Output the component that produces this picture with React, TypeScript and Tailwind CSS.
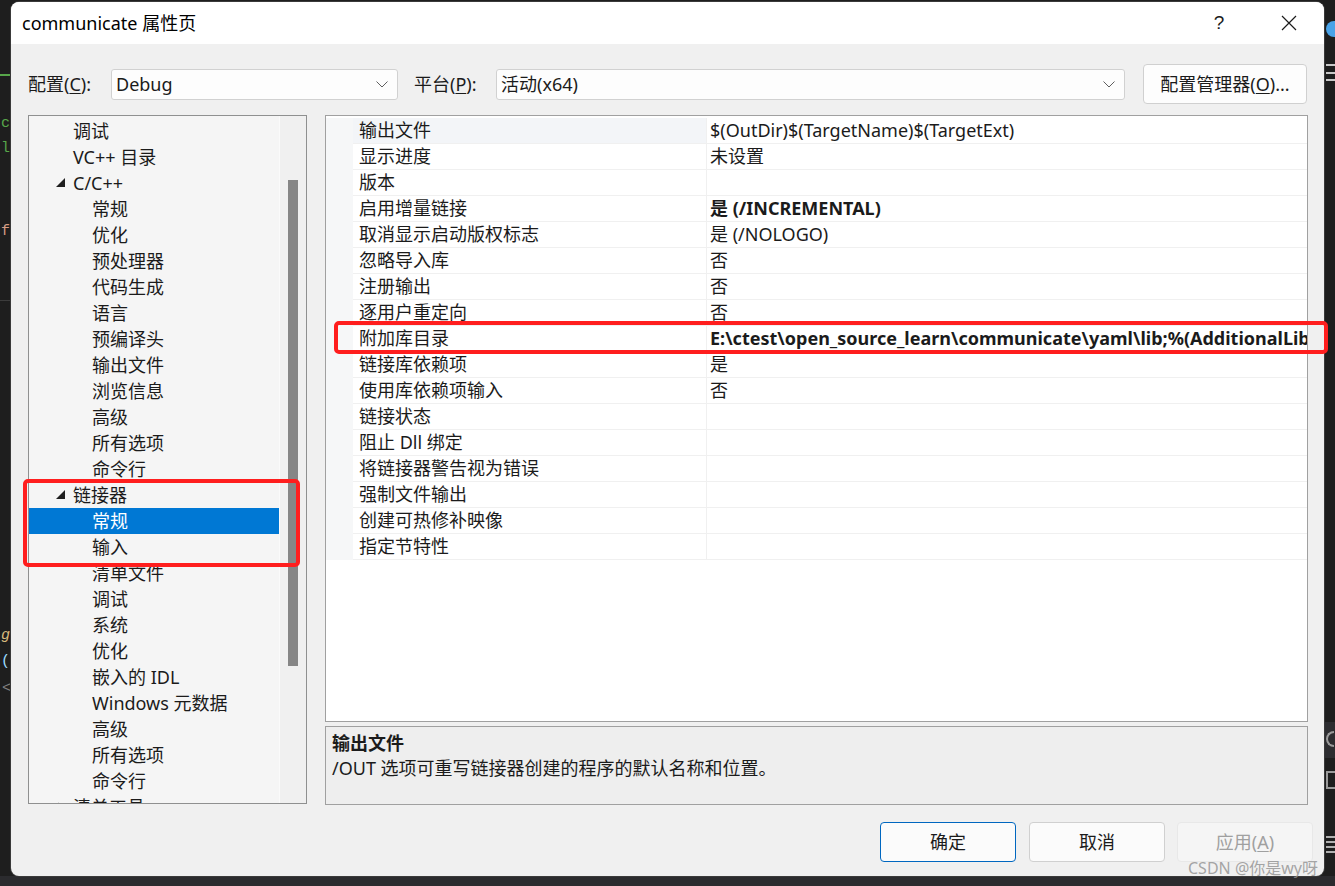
import React from "react";

// Property page dialog (Visual Studio style)

interface TreeItem {
  label: string;
  level: 0 | 1;
  expand?: "open" | "closed";
  selected?: boolean;
}

interface PropRow {
  name: string;
  value?: string;
  bold?: boolean;
  current?: boolean;
}

const tree: TreeItem[] = [
  { label: "调试", level: 0 },
  { label: "VC++ 目录", level: 0 },
  { label: "C/C++", level: 0, expand: "open" },
  { label: "常规", level: 1 },
  { label: "优化", level: 1 },
  { label: "预处理器", level: 1 },
  { label: "代码生成", level: 1 },
  { label: "语言", level: 1 },
  { label: "预编译头", level: 1 },
  { label: "输出文件", level: 1 },
  { label: "浏览信息", level: 1 },
  { label: "高级", level: 1 },
  { label: "所有选项", level: 1 },
  { label: "命令行", level: 1 },
  { label: "链接器", level: 0, expand: "open" },
  { label: "常规", level: 1, selected: true },
  { label: "输入", level: 1 },
  { label: "清单文件", level: 1 },
  { label: "调试", level: 1 },
  { label: "系统", level: 1 },
  { label: "优化", level: 1 },
  { label: "嵌入的 IDL", level: 1 },
  { label: "Windows 元数据", level: 1 },
  { label: "高级", level: 1 },
  { label: "所有选项", level: 1 },
  { label: "命令行", level: 1 },
  { label: "清单工具", level: 0, expand: "closed" },
];

const rows: PropRow[] = [
  { name: "输出文件", value: "$(OutDir)$(TargetName)$(TargetExt)", current: true },
  { name: "显示进度", value: "未设置" },
  { name: "版本" },
  { name: "启用增量链接", value: "是 (/INCREMENTAL)", bold: true },
  { name: "取消显示启动版权标志", value: "是 (/NOLOGO)" },
  { name: "忽略导入库", value: "否" },
  { name: "注册输出", value: "否" },
  { name: "逐用户重定向", value: "否" },
  { name: "附加库目录", value: "E:\\ctest\\open_source_learn\\communicate\\yaml\\lib;%(AdditionalLibraryDirectories)", bold: true },
  { name: "链接库依赖项", value: "是" },
  { name: "使用库依赖项输入", value: "否" },
  { name: "链接状态" },
  { name: "阻止 Dll 绑定" },
  { name: "将链接器警告视为错误" },
  { name: "强制文件输出" },
  { name: "创建可热修补映像" },
  { name: "指定节特性" },
];

const Chevron = () => (
  <svg width="12" height="7" viewBox="0 0 12 7">
    <path d="M0.5 0.5 L6 6 L11.5 0.5" fill="none" stroke="#5f5f5f" strokeWidth="1" />
  </svg>
);

const Expander = ({ open }: { open: boolean }) =>
  open ? (
    <svg width="9" height="9" viewBox="0 0 9 9">
      <polygon points="9,0 9,9 0,9" fill="#1e1e1e" />
    </svg>
  ) : (
    <svg width="9" height="9" viewBox="0 0 9 9">
      <polygon points="2,1 7,4.5 2,8" fill="none" stroke="#444" strokeWidth="1" />
    </svg>
  );

const Combo = ({ text, width }: { text: string; width: string }) => (
  <div className={`${width} h-[31px] flex items-center justify-between pl-[4px] pr-[9px] bg-[#fdfdfd] border border-[#d1d1d1] rounded-[3px]`}>
    <span>{text}</span>
    <Chevron />
  </div>
);

const Button = ({ children, kind }: { children: React.ReactNode; kind?: "default" | "disabled" }) => (
  <div
    className={
      "w-[136px] h-[40px] flex items-center justify-center rounded-[4px] " +
      (kind === "default"
        ? "border border-[#0067c0] bg-[#fbfbfb] text-[#1b1b1b]"
        : kind === "disabled"
        ? "border border-[#e8e8e8] bg-[#f5f5f5] text-[#a0a0a0]"
        : "border border-[#d0d0d0] bg-[#fbfbfb] text-[#1b1b1b]")
    }
  >
    {children}
  </div>
);

export default function App() {
  return (
    <div className="relative w-[1335px] h-[886px] overflow-hidden bg-[#1e1e1e] font-[family-name:'Noto_Sans','Noto_Sans_CJK_SC',sans-serif] text-[18px] text-[#1b1b1b]">
      {/* editor fragments behind the dialog */}
      <div className="absolute left-0 top-[74px] w-[10px] border-t-2 border-dashed border-[#57a64a]" />
      <span className="absolute left-[1px] top-[115px] text-[15px] leading-[18px] text-[#57a64a] font-[family-name:'Liberation_Mono',monospace]">c</span>
      <span className="absolute left-[1px] top-[140px] text-[15px] leading-[18px] text-[#57a64a] font-[family-name:'Liberation_Mono',monospace]">l</span>
      <span className="absolute left-[1px] top-[223px] text-[15px] leading-[18px] text-[#d69d85] font-[family-name:'Liberation_Mono',monospace]">f</span>
      <div className="absolute left-0 top-[300px] w-[11px] h-[1px] bg-[#3c3c3c]" />
      <span className="absolute left-[1px] top-[627px] text-[15px] leading-[18px] text-[#d7ba7d] font-[family-name:'Liberation_Mono',monospace] italic">g</span>
      <span className="absolute left-[1px] top-[653px] text-[15px] leading-[18px] text-[#9cdcfe] font-[family-name:'Liberation_Mono',monospace]">(</span>
      <span className="absolute left-[2px] top-[680px] text-[15px] leading-[18px] text-[#808080] font-[family-name:'Liberation_Mono',monospace]">&lt;</span>
      <div className="absolute left-[1326px] top-[21px] w-[16px] h-[16px] rounded-full bg-[#4aa3e8]" />
      <div className="absolute left-[1326px] top-[64px] w-[9px] h-[17px] flex flex-col justify-between">
        <div className="h-[2px] bg-[#c8c8c8]" />
        <div className="h-[2px] bg-[#c8c8c8]" />
        <div className="h-[2px] bg-[#c8c8c8]" />
      </div>
      <div className="absolute left-[1325px] top-[722px] w-[10px] h-[36px] bg-[#2d2d30]" />
      <div className="absolute left-[1326px] top-[731px] w-[8px] h-[16px] border-2 border-r-0 border-[#9a9a9a] rounded-l-full" />
      <div className="absolute left-[1326px] top-[771px] w-[9px] h-[18px] border-2 border-r-0 border-[#9a9a9a]" />
      <div className="absolute left-[1326px] top-[836px] w-[9px] flex flex-col gap-[3px]">
        <div className="h-[2px] bg-[#b0b0b0]" />
        <div className="h-[2px] bg-[#b0b0b0]" />
        <div className="h-[2px] bg-[#b0b0b0]" />
        <div className="h-[2px] bg-[#b0b0b0]" />
      </div>
      <div className="absolute left-0 top-[876px] w-full h-[10px] bg-[#2b2b2e]" />

      {/* dialog */}
      <div className="ml-[11px] mt-[2px] w-[1313px] h-[874px] rounded-[8px] overflow-hidden bg-[#f0f0f0] flex flex-col relative shadow-[0_0_0_1px_#3a3a3a]">
        {/* title bar */}
        <div className="h-[42px] bg-white flex items-center justify-between pl-[11px]">
          <span className="text-[18px] text-black">communicate 属性页</span>
          <div className="flex items-center h-full">
            <span className="w-[70px] text-center text-[19px] text-[#1b1b1b] font-[family-name:'Liberation_Sans',sans-serif]">?</span>
            <div className="w-[70px] h-full flex items-center justify-center">
              <svg width="16" height="16" viewBox="0 0 16 16">
                <path d="M1 1 L15 15 M15 1 L1 15" stroke="#1b1b1b" strokeWidth="1.2" />
              </svg>
            </div>
          </div>
        </div>

        {/* configuration row */}
        <div className="mt-[20px] h-[40px] flex items-center pl-[17px] pr-[17px]">
          <span className="w-[83px]">
            配置(<span className="underline underline-offset-2">C</span>):
          </span>
          <Combo text="Debug" width="w-[287px]" />
          <span className="ml-[16px] w-[82px]">
            平台(<span className="underline underline-offset-2">P</span>):
          </span>
          <Combo text="活动(x64)" width="w-[629px]" />
          <div className="ml-[18px] w-[164px] h-[40px] flex items-center justify-center bg-[#fdfdfd] border border-[#d0d0d0] rounded-[4px]">
            配置管理器(<span className="underline underline-offset-2">O</span>)...
          </div>
        </div>

        {/* main panels */}
        <div className="mt-[11px] h-[690px] flex pl-[17px] gap-[18px]">
          {/* tree */}
          <div className="w-[279px] h-[689px] border border-[#8f9090] bg-[#f5f5f5] flex overflow-hidden">
            <div className="w-[250px] h-full pt-[2px] overflow-hidden">
              {tree.map((t, i) => (
                <div
                  key={i}
                  className={
                    "h-[26px] flex items-center whitespace-nowrap relative " +
                    (t.selected ? "bg-[#0078d4] text-white " : "") +
                    (t.level === 0 ? "pl-[44px]" : "pl-[63px]")
                  }
                >
                  {t.expand && (
                    <span className="absolute left-[27px] top-[8px]">
                      <Expander open={t.expand === "open"} />
                    </span>
                  )}
                  {t.label}
                </div>
              ))}
            </div>
            <div className="flex-1 h-full border-l border-[#fafafa] bg-[#f0f0f0] pt-[64px] flex justify-center">
              <div className="w-[10px] h-[486px] bg-[#868686]" />
            </div>
          </div>

          {/* property grid + description */}
          <div className="w-[983px] flex flex-col gap-[4px]">
            <div className="h-[607px] border border-[#a0a0a0] bg-white pt-[2px]">
              {rows.map((r, i) => (
                <div key={i} className="h-[26px] flex">
                  <div className="w-[27px] bg-[#f6f7f8]" />
                  <div
                    className={
                      "w-[354px] pl-[6px] flex items-center border-b border-r border-[#f0f0f0] " +
                      (r.current ? "bg-[#f3f5f8]" : "bg-white")
                    }
                  >
                    {r.name}
                  </div>
                  <div
                    className={
                      "flex-1 min-w-0 pl-[3px] flex items-center border-b border-[#f0f0f0] overflow-hidden whitespace-nowrap " +
                      (r.bold ? "font-bold" : "")
                    }
                  >
                    {r.value}
                  </div>
                </div>
              ))}
            </div>
            <div className="h-[79px] border border-[#a0a0a0] bg-[#eeeeee] pl-[6px] pt-[3px] flex flex-col">
              <span className="font-bold leading-[26px]">输出文件</span>
              <span className="leading-[24px]">/OUT 选项可重写链接器创建的程序的默认名称和位置。</span>
            </div>
          </div>
        </div>

        {/* buttons */}
        <div className="mt-[17px] flex justify-end pr-[11px]">
          <Button kind="default">确定</Button>
          <div className="ml-[13px]">
            <Button>取消</Button>
          </div>
          <div className="ml-[12px]">
            <Button kind="disabled">
              应用(<span className="underline underline-offset-2">A</span>)
            </Button>
          </div>
        </div>
      </div>

      {/* annotation boxes */}
      <div className="absolute left-[23px] top-[479px] w-[277px] h-[88px] border-4 border-[#ff1e1e] rounded-[5px]" />
      <div className="absolute left-[334px] top-[321px] w-[994px] h-[33px] border-4 border-[#ff1e1e] rounded-[5px]" />

      {/* watermark */}
      <span className="absolute left-[1188px] top-[856px] text-[16px] text-[#8f8f8f]/80">CSDN @你是wy呀</span>
    </div>
  );
}
